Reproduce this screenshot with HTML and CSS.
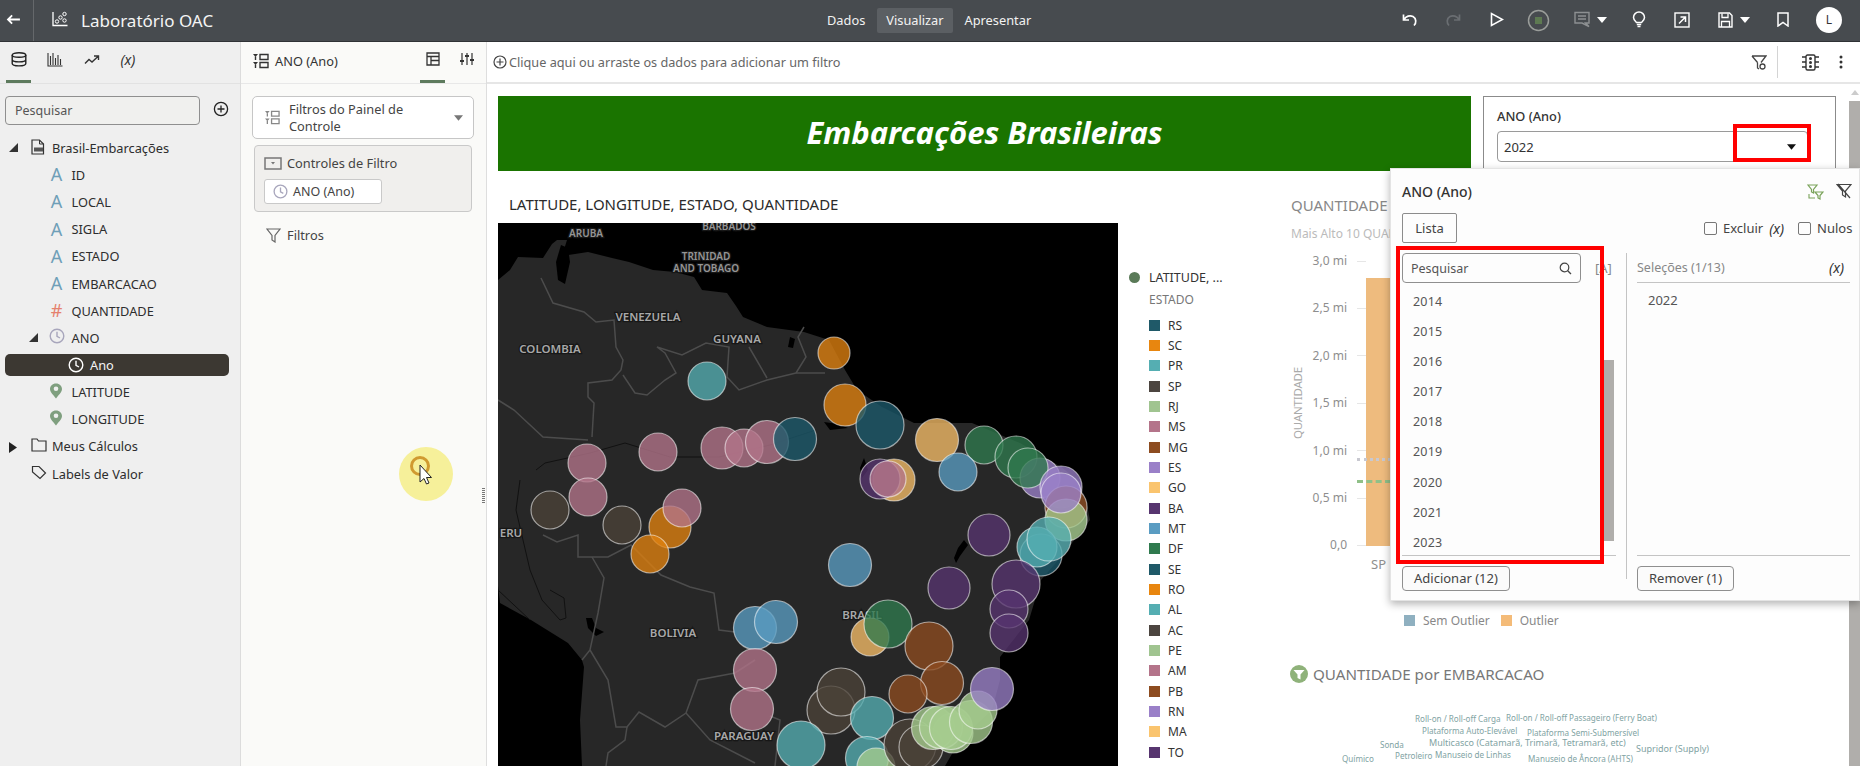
FILE: index.html
```html
<!DOCTYPE html>
<html lang="pt-BR">
<head>
<meta charset="utf-8">
<title>Laboratório OAC</title>
<link rel="stylesheet" href="styles.css">
</head>
<body>
<svg class="sprite" width="0" height="0">
  <symbol id="clock" viewBox="0 0 16 16"><circle cx="8" cy="8" r="6.8" fill="none" stroke="currentColor" stroke-width="1.4"/><path d="M8 3.8V8.4L11 10" fill="none" stroke="currentColor" stroke-width="1.4"/></symbol>
  <symbol id="pin" viewBox="0 0 14 16"><path d="M7 .5C3.4.5 1 3 1 6c0 3.600 4 6.500 6 9.500 2-3 6-5.900 6-9.500C13 3 10.600.5 7 .5z" fill="currentColor"/><circle cx="7" cy="5.800" r="2.300" fill="#f0f0f0"/></symbol>
  <symbol id="caret" viewBox="0 0 10 6"><path d="M0 0H10L5 6z" fill="currentColor"/></symbol>
  <symbol id="filterrows" viewBox="0 0 16 16"><path d="M0 1H5L2.500 4zM0 9H5L2.500 12z" fill="currentColor"/><path d="M1.800 3.500h1.400V7H1.800zM1.800 11.500h1.400V15H1.800z" fill="currentColor"/><path d="M7 1.500h8v5H7zM7 9.500h8v5H7z" fill="none" stroke="currentColor" stroke-width="1.400"/></symbol>
</svg>

<div class="app">
  <header class="topbar">
    <button class="back" aria-label="Voltar">
      <svg width="15" height="11" viewBox="0 0 16 12"><path d="M15 6H2M6.500 1.500 2 6l4.500 4.500" fill="none" stroke="#fff" stroke-width="2"/></svg>
    </button>
    <div class="brand">
      <svg width="16" height="16" viewBox="0 0 16 16"><path d="M1 1V14.500H15.500" fill="none" stroke="#fff" stroke-width="1.300"/><circle cx="5" cy="10.500" r="1.700" fill="none" stroke="#fff"/><circle cx="8.500" cy="6.500" r="1.700" fill="none" stroke="#fff"/><circle cx="12.500" cy="3" r="1.700" fill="none" stroke="#fff"/><circle cx="12.500" cy="9.500" r="1.700" fill="none" stroke="#fff"/></svg>
      <span>Laboratório OAC</span>
    </div>
    <nav class="modes">
      <span class="mode">Dados</span>
      <span class="mode active">Visualizar</span>
      <span class="mode">Apresentar</span>
    </nav>
    <div class="actions">
      <svg class="a1" width="16" height="14" viewBox="0 0 16 14"><path d="M1.500 1.500V7H7M2 6.500C4 3 8 2 11 3.500c3.500 2 3.500 6.500 1 9" fill="none" stroke="#fff" stroke-width="1.700"/></svg>
      <svg class="a2" width="16" height="14" viewBox="0 0 16 14"><path d="M14.500 1.500V7H9M14 6.500C12 3 8 2 5 3.500c-3.500 2-3.500 6.500-1 9" fill="none" stroke="#6a6e72" stroke-width="1.700"/></svg>
      <svg class="a3" width="14" height="15" viewBox="0 0 14 15"><path d="M1.500 1.500V13.500L12.500 7.500z" fill="none" stroke="#fff" stroke-width="1.600"/></svg>
      <svg class="a4" width="23" height="23" viewBox="0 0 23 23"><circle cx="11.500" cy="11.500" r="10" fill="none" stroke="#9a9d9a" stroke-width="1.500"/><rect x="8" y="8" width="7" height="7" fill="#5e7a52"/></svg>
      <svg class="a5" width="16" height="17" viewBox="0 0 16 17"><path d="M1 1.500H15V12H11.500L15 15.500 8 12H1z" fill="none" stroke="#8d9092" stroke-width="1.400"/><path d="M4 5h8M4 8h8" stroke="#8d9092" stroke-width="1.300"/></svg>
      <svg class="a6 caret-w" width="10" height="6"><use href="#caret"/></svg>
      <svg class="a7" width="14" height="17" viewBox="0 0 14 17"><path d="M4.500 11.500C3 10 1.500 8.800 1.500 6.500a5.500 5.500 0 0 1 11 0c0 2.300-1.500 3.500-3 5z" fill="none" stroke="#fff" stroke-width="1.500"/><path d="M4.800 13.500h4.400M5.500 15.500h3" stroke="#fff" stroke-width="1.400"/></svg>
      <svg class="a8" width="16" height="16" viewBox="0 0 16 16"><rect x="1" y="1" width="14" height="14" fill="none" stroke="#fff" stroke-width="1.400"/><path d="M5 11.500 11 5.500M6.500 5H11.500V10" fill="none" stroke="#fff" stroke-width="1.500"/></svg>
      <svg class="a9" width="15" height="16" viewBox="0 0 15 16"><path d="M1 1H11.500L14 3.500V15H1z" fill="none" stroke="#fff" stroke-width="1.400"/><path d="M4 1.500V5.500H10V1.500M3.500 15V9.500H11.500V15" fill="none" stroke="#fff" stroke-width="1.300"/></svg>
      <svg class="a10 caret-w" width="10" height="6"><use href="#caret"/></svg>
      <svg class="a11" width="12" height="15" viewBox="0 0 12 15"><path d="M1 1H11V14L6 10.500 1 14z" fill="none" stroke="#fff" stroke-width="1.500"/></svg>
      <span class="avatar">L</span>
    </div>
  </header>

  <div class="main">
    <aside class="datapanel">
      <div class="tabs">
        <span class="tab on"><svg width="16" height="15" viewBox="0 0 16 15"><ellipse cx="8" cy="3" rx="6.800" ry="2.300" fill="none" stroke="#222" stroke-width="1.400"/><path d="M1.200 3V11.500C1.200 13 4 13.900 8 13.900S14.800 13 14.800 11.500V3M1.200 7.500C1.200 9 4 9.900 8 9.900S14.800 9 14.800 7.500" fill="none" stroke="#222" stroke-width="1.400"/></svg></span>
        <span class="tab"><svg width="16" height="15" viewBox="0 0 16 15"><path d="M1 1V14H15.500M3.500 13V4M6 13V1M8.500 13V6M11 13V3M13.500 13V7" fill="none" stroke="#333" stroke-width="1.100"/></svg></span>
        <span class="tab"><svg width="16" height="10" viewBox="0 0 16 10"><path d="M1 8.500 5 4.500 8 7 14 1.500M10 1H14.500V5" fill="none" stroke="#333" stroke-width="1.400"/></svg></span>
        <span class="tab vars">(x)</span>
      </div>
      <div class="searchrow">
        <div class="search">Pesquisar</div>
        <svg width="16" height="16" viewBox="0 0 16 16"><circle cx="8" cy="8" r="6.600" fill="none" stroke="#222" stroke-width="1.300"/><path d="M8 4.500V11.500M4.500 8H11.500" stroke="#222" stroke-width="1.300"/></svg>
      </div>
      <ul class="tree">
        <li class="node root"><svg class="tri" width="9" height="9" viewBox="0 0 9 9"><path d="M9 0V9H0z" fill="#333"/></svg><svg class="ico" width="14" height="16" viewBox="0 0 14 16"><path d="M1 1H8.500L12.500 5V15H1z" fill="none" stroke="#333" stroke-width="1.200"/><path d="M8.500 1V5H12.500" fill="none" stroke="#333"/><rect x="3" y="8.500" width="9" height="4" fill="#555"/></svg><span>Brasil-Embarcações</span></li>
        <li class="node leaf"><b class="ta">A</b><span>ID</span></li>
        <li class="node leaf"><b class="ta">A</b><span>LOCAL</span></li>
        <li class="node leaf"><b class="ta">A</b><span>SIGLA</span></li>
        <li class="node leaf"><b class="ta">A</b><span>ESTADO</span></li>
        <li class="node leaf"><b class="ta">A</b><span>EMBARCACAO</span></li>
        <li class="node leaf"><b class="tn">#</b><span>QUANTIDADE</span></li>
        <li class="node leaf hastri"><svg class="tri" width="9" height="9" viewBox="0 0 9 9"><path d="M9 0V9H0z" fill="#333"/></svg><svg class="tc" width="16" height="16"><use href="#clock"/></svg><span>ANO</span></li>
        <li class="node sel"><svg width="16" height="16" class="tw"><use href="#clock"/></svg><span>Ano</span></li>
        <li class="node leaf"><svg class="tp" width="14" height="16"><use href="#pin"/></svg><span>LATITUDE</span></li>
        <li class="node leaf"><svg class="tp" width="14" height="16"><use href="#pin"/></svg><span>LONGITUDE</span></li>
        <li class="node root"><svg class="tri" width="8" height="11" viewBox="0 0 8 11"><path d="M0 0 8 5.500 0 11z" fill="#222"/></svg><svg class="ico" width="16" height="14" viewBox="0 0 16 14"><path d="M1 1H6L7.500 3H15V13H1z" fill="none" stroke="#333" stroke-width="1.200"/></svg><span>Meus Cálculos</span></li>
        <li class="node root notri"><svg class="ico" width="16" height="15" viewBox="0 0 16 15"><path d="M1.500 1.500H8L14.500 8 9 13.500 1.500 7z" fill="none" stroke="#333" stroke-width="1.200"/></svg><span>Labels de Valor</span></li>
      </ul>
    </aside>

    <aside class="filterpanel">
      <div class="fp-head">
        <svg class="fr" width="16" height="16"><use href="#filterrows"/></svg>
        <span class="fp-title">ANO (Ano)</span>
        <span class="fp-tab on"><svg width="14" height="14" viewBox="0 0 14 14"><path d="M1 1H13V13H1zM1 4.500H13M5 4.500V13M5 8.500H13" fill="none" stroke="#333" stroke-width="1.300"/></svg></span>
        <span class="fp-tab"><svg width="14" height="14" viewBox="0 0 14 14"><path d="M2 1V13M7 1V13M12 1V13" stroke="#333" stroke-width="1.200"/><path d="M0 9H4M5 4H9M10 8H14" stroke="#333" stroke-width="2"/></svg></span>
      </div>
      <div class="fp-body">
        <div class="fp-select">
          <svg class="fr2" width="15" height="15"><use href="#filterrows"/></svg>
          <span>Filtros do Painel de Controle</span>
          <svg class="fp-caret" width="9" height="6"><use href="#caret"/></svg>
        </div>
        <div class="controls">
          <div class="controls-title">
            <svg width="18" height="13" viewBox="0 0 18 13"><rect x="1" y="1" width="16" height="11" fill="none" stroke="#777" stroke-width="1.500"/><path d="M7 5H11L9 7.500z" fill="#777"/></svg>
            <span>Controles de Filtro</span>
          </div>
          <div class="chip"><svg class="tc" width="15" height="15"><use href="#clock"/></svg><span>ANO (Ano)</span></div>
        </div>
        <div class="filters-row">
          <svg width="15" height="15" viewBox="0 0 15 15"><path d="M1 1H14L9 7.500V14L6 12V7.500z" fill="none" stroke="#666" stroke-width="1.200"/></svg>
          <span>Filtros</span>
        </div>
      </div>
      <span class="splitter"></span>
      <div class="cursor-glow" aria-hidden="true">
        <svg width="54" height="54" viewBox="0 0 54 54"><circle cx="21" cy="19" r="8.500" fill="none" stroke="#d09a30" stroke-width="3"/><path d="M21 18V35L25 31.500 27.500 37 30 36 27.500 30.500H32.500z" fill="#fff" stroke="#222" stroke-width="1"/></svg>
      </div>
    </aside>

    <section class="canvas">
      <div class="filterbar">
        <svg class="fb-plus" width="14" height="14" viewBox="0 0 14 14"><circle cx="7" cy="7" r="6" fill="none" stroke="#444" stroke-width="1.200"/><path d="M7 3.500V10.500M3.500 7H10.500" stroke="#444" stroke-width="1.200"/></svg>
        <span class="fb-text">Clique aqui ou arraste os dados para adicionar um filtro</span>
        <svg class="fb-f" width="16" height="15" viewBox="0 0 16 15"><path d="M1 1H15L10 7.500M6.500 7.500V13L8 14M1 1 6.500 7.500" fill="none" stroke="#444" stroke-width="1.300"/><circle cx="11.500" cy="11.500" r="2.500" fill="none" stroke="#444" stroke-width="1.300"/></svg>
        <span class="fb-div"></span>
        <svg class="fb-t" width="17" height="17" viewBox="0 0 17 17"><rect x="4" y="1" width="9" height="15" rx="1.500" fill="none" stroke="#333" stroke-width="1.400"/><circle cx="8.500" cy="4.500" r="1.500" fill="#333"/><circle cx="8.500" cy="8.500" r="1.500" fill="#333"/><circle cx="8.500" cy="12.500" r="1.500" fill="#333"/><path d="M0 3H4M0 8H4M0 13H4M13 3H17M13 8H17M13 13H17" stroke="#333" stroke-width="1.300"/></svg>
        <svg class="fb-m" width="4" height="14" viewBox="0 0 4 14"><circle cx="2" cy="2" r="1.500" fill="#333"/><circle cx="2" cy="7" r="1.500" fill="#333"/><circle cx="2" cy="12" r="1.500" fill="#333"/></svg>
      </div>

      <div class="board">
        <div class="sheet">
          <div class="top-row">
            <div class="banner">Embarcações Brasileiras</div>
            <div class="ctl">
              <div class="ctl-label">ANO (Ano)</div>
              <div class="ctl-input"><span>2022</span><svg width="9" height="6"><use href="#caret"/></svg></div>
            </div>
          </div>
          <div class="viz-row">
            <div class="map-col">
              <div class="viz-title">LATITUDE, LONGITUDE, ESTADO, QUANTIDADE</div>
              <svg class="map" width="620" height="543" viewBox="498 223 620 543">
                <rect x="498" y="223" width="620" height="543" fill="#000"/>
                <path fill="#272727" d="M498 280 510 270 518 257 543 258 552 244 557 240 567 240 562 256 588 252 612 258 629 262 653 270 675 272 694 277 702 290 727 293 736 306 743 317 767 327 804 332 829 340 845 370 857 390 882 407 914 423 972 423 1020 443 1061 467 1078 480 1086 500 1090 520 1061 557 1041 580 1029 620 1000 657 1000 680 992 710 960 740 945 766 582 766 580 720 584 667 582 660 568 643 531 620 500 603 498 586z"/>
                <g fill="#000">
                  <path d="M561 245 568 248 570 262 565 284 558 280 556 262z"/>
                  <path d="M790 337 795 339 793 348 788 347z"/>
                  <path d="M586 618 592 618 596 628 604 632 596 636 588 628z"/>
                  <path d="M964 540 968 545 960 556 956 563 954 558 958 548z"/>
                  <path d="M824 422 838 424 848 428 830 430z"/>
                  <path d="M864 458 868 470 862 478 860 468z"/>
                </g>
                <g class="borders">
                  <path d="M541 278 553 303 584 312 596 322 614 320 616 347 623 360 621 370 612 380 588 383 588 397 594 403 592 437"/>
                  <path d="M623 375 635 393 647 395 665 380 676 373 665 353 657 347 682 355 706 343 729 347 727 377 739 390 767 380 796 373 825 373"/>
                  <path d="M749 347 767 378M804 327 798 337 806 357 796 373"/>
                  <path d="M498 400 514 410 543 437 588 440"/>
                  <path d="M543 535 557 542 578 535 578 557 608 557 631 545 661 575 690 587 714 593 719 630 735 632"/>
                  <path d="M592 557 604 578 598 613 590 650 582 660M590 650 608 680 616 727 627 727 639 712 665 727 686 713 698 680 735 673 755 660"/>
                  <path d="M627 727 625 740 608 753 606 766M686 713 710 740 755 763M770 716 780 720 775 766"/>
                </g>
                <g class="rivers">
                  <path d="M536 470 545 463 590 453 625 443 670 457 719 457 770 445 816 430"/>
                  <path d="M520 480 516 510 530 570 542 600 560 620 566 618 564 598 550 590M498 590 530 620"/>
                </g>
                <g class="labels">
                  <text x="586" y="237">ARUBA</text>
                  <text x="729" y="230">BARBADOS</text>
                  <text x="706" y="260">TRINIDAD</text>
                  <text x="706" y="272">AND TOBAGO</text>
                  <text class="lg" x="648" y="321">VENEZUELA</text>
                  <text class="lg" x="550" y="353">COLOMBIA</text>
                  <text class="lg" x="737" y="343">GUYANA</text>
                  <text class="lg" x="511" y="537">ERU</text>
                  <text class="lg" x="673" y="637">BOLIVIA</text>
                  <text class="lg" x="862" y="619">BRASIL</text>
                  <text class="lg" x="744" y="740">PARAGUAY</text>
                </g>
                <g class="dots">
                  <circle class="c-sc" cx="834" cy="353" r="16"/>
                  <circle class="c-pr" cx="707" cy="381" r="19"/>
                  <circle class="c-sc" cx="845" cy="405" r="21"/>
                  <circle class="c-rs" cx="880" cy="425" r="24"/>
                  <circle class="c-go" cx="937" cy="440" r="21.500"/>
                  <circle class="c-df" cx="984" cy="445" r="19"/>
                  <circle class="c-df" cx="1016" cy="457" r="21"/>
                  <circle class="c-mt" cx="958" cy="472" r="19"/>
                  <circle class="c-es" cx="1040" cy="478" r="20"/>
                  <circle class="c-df" cx="1028" cy="468" r="20"/>
                  <circle class="c-es" cx="1061" cy="487" r="21"/>
                  <circle class="c-go" cx="894" cy="480" r="21"/>
                  <circle class="c-ba" cx="880" cy="479" r="20"/>
                  <circle class="c-ms" cx="888" cy="479" r="18"/>
                  <circle class="c-ms" cx="658" cy="452" r="19"/>
                  <circle class="c-ms" cx="587" cy="463" r="19"/>
                  <circle class="c-ms" cx="722" cy="448" r="21"/>
                  <circle class="c-ms" cx="744" cy="448" r="19"/>
                  <circle class="c-ms" cx="767" cy="442" r="21.500"/>
                  <circle class="c-rs" cx="795" cy="439" r="21.500"/>
                  <circle class="c-ms" cx="588" cy="497" r="19"/>
                  <circle class="c-sp" cx="550" cy="510" r="19"/>
                  <circle class="c-sp" cx="622" cy="525" r="19"/>
                  <circle class="c-sc" cx="670" cy="527" r="21"/>
                  <circle class="c-ms" cx="682" cy="508" r="19"/>
                  <circle class="c-sc" cx="650" cy="554" r="19"/>
                  <circle class="c-mg" cx="1066" cy="507" r="21"/>
                  <circle class="c-rj" cx="1066" cy="520" r="21"/>
                  <circle class="c-es" cx="1061" cy="493" r="20"/>
                  <circle class="c-rs" cx="1041" cy="555" r="21"/>
                  <circle class="c-pr" cx="1037" cy="547" r="20"/>
                  <circle class="c-pr" cx="1049" cy="539" r="22"/>
                  <circle class="c-ba" cx="989" cy="535" r="21"/>
                  <circle class="c-ba" cx="949" cy="588" r="21"/>
                  <circle class="c-ba" cx="1016" cy="584" r="24"/>
                  <circle class="c-ba" cx="1009" cy="609" r="19"/>
                  <circle class="c-ba" cx="1009" cy="633" r="19"/>
                  <circle class="c-mt" cx="850" cy="565" r="21.500"/>
                  <circle class="c-mt" cx="755" cy="628" r="21.500"/>
                  <circle class="c-mt" cx="776" cy="622" r="21.500"/>
                  <circle class="c-go" cx="870" cy="637" r="19"/>
                  <circle class="c-df" cx="888" cy="624" r="24"/>
                  <circle class="c-mg" cx="929" cy="646" r="24"/>
                  <circle class="c-mg" cx="942" cy="683" r="21.500"/>
                  <circle class="c-mg" cx="908" cy="694" r="19"/>
                  <circle class="c-ms" cx="755" cy="670" r="21.500"/>
                  <circle class="c-ms" cx="752" cy="709" r="21.500"/>
                  <circle class="c-sp" cx="831" cy="710" r="24"/>
                  <circle class="c-sp" cx="841" cy="692" r="24"/>
                  <circle class="c-pr" cx="872" cy="718" r="21.500"/>
                  <circle class="c-pr" cx="801" cy="745" r="24"/>
                  <circle class="c-pr" cx="867" cy="758" r="21.500"/>
                  <circle class="c-rj" cx="876" cy="767" r="19"/>
                  <circle class="c-sp" cx="910" cy="745" r="26"/>
                  <circle class="c-sp" cx="921" cy="747" r="22"/>
                  <circle class="c-rj" cx="953" cy="733" r="20"/>
                  <circle class="c-rj" cx="933" cy="728" r="21.500"/>
                  <circle class="c-rj" cx="941" cy="727" r="21.500"/>
                  <circle class="c-rj" cx="951" cy="728" r="21.500"/>
                  <circle class="c-rj" cx="971" cy="722" r="21.500"/>
                  <circle class="c-rj" cx="978" cy="710" r="19"/>
                  <circle class="c-es" cx="992" cy="689" r="21.500"/>
                </g>
              </svg>
            </div>
            <div class="legend">
              <div class="lg-head"><i class="lg-dot"></i><span>LATITUDE, ...</span></div>
              <div class="lg-sub">ESTADO</div>
              <ul class="lg-list">
                <li><i class="s-rs"></i>RS</li><li><i class="s-sc"></i>SC</li><li><i class="s-pr"></i>PR</li><li><i class="s-sp"></i>SP</li><li><i class="s-rj"></i>RJ</li><li><i class="s-ms"></i>MS</li><li><i class="s-mg"></i>MG</li><li><i class="s-es"></i>ES</li><li><i class="s-go"></i>GO</li><li><i class="s-ba"></i>BA</li><li><i class="s-mt"></i>MT</li><li><i class="s-df"></i>DF</li><li><i class="s-rs"></i>SE</li><li><i class="s-sc"></i>RO</li><li><i class="s-pr"></i>AL</li><li><i class="s-sp"></i>AC</li><li><i class="s-rj"></i>PE</li><li><i class="s-ms"></i>AM</li><li><i class="s-mg"></i>PB</li><li><i class="s-es"></i>RN</li><li><i class="s-go"></i>MA</li><li><i class="s-ba"></i>TO</li>
              </ul>
            </div>
            <div class="chart-col">
              <div class="chart-title">QUANTIDADE</div>
              <div class="chart-sub">Mais Alto 10 QUANTIDADE</div>
              <div class="plot">
                <div class="y-title"><span>QUANTIDADE</span></div>
                <div class="y-axis">
                  <span>3,0 mi</span><span>2,5 mi</span><span>2,0 mi</span><span>1,5 mi</span><span>1,0 mi</span><span>0,5 mi</span><span>0,0</span>
                </div>
                <div class="bars">
                  <div class="bar"></div>
                  <div class="x-label">SP</div>
                  <i class="ref ref1"></i>
                  <i class="ref ref2"></i>
                </div>
              </div>
              <div class="outlier-legend">
                <i class="ol-a"></i><span>Sem Outlier</span><i class="ol-b"></i><span>Outlier</span>
              </div>
              <div class="cloud-title">
                <svg width="18" height="18" viewBox="0 0 18 18"><circle cx="9" cy="9" r="9" fill="#8fb27a"/><path d="M3.500 5H14.500L10.500 9.500V14.500L7.500 13V9.500z" fill="#fff"/></svg>
                <span>QUANTIDADE por EMBARCACAO</span>
              </div>
              <div class="cloud">
                <span class="w" style="left:124px;top:5px">Roll-on / Roll-off Carga</span>
                <span class="w" style="left:215px;top:4px">Roll-on / Roll-off Passageiro (Ferry Boat)</span>
                <span class="w" style="left:131px;top:17px">Plataforma Auto-Elevável</span>
                <span class="w" style="left:236px;top:19px">Plataforma Semi-Submersível</span>
                <span class="w" style="left:89px;top:31px">Sonda</span>
                <span class="w big" style="left:138px;top:29px">Multicasco (Catamarã, Trimarã, Tetramarã, etc)</span>
                <span class="w big" style="left:345px;top:35px">Supridor (Supply)</span>
                <span class="w" style="left:51px;top:45px">Químico</span>
                <span class="w" style="left:104px;top:42px">Petroleiro</span>
                <span class="w" style="left:144px;top:41px">Manuseio de Linhas</span>
                <span class="w" style="left:237px;top:45px">Manuseio de Âncora (AHTS)</span>
              </div>
            </div>
          </div>
        </div>
        <div class="scrollbar"><span class="sb-up"></span><span class="sb-thumb"></span></div>
      </div>
    </section>
  </div>

  <div class="redbox rb-caret"></div>

  <div class="popup">
    <div class="pop-head">
      <span class="pop-title">ANO (Ano)</span>
      <svg class="pi1" width="17" height="17" viewBox="0 0 17 17"><path d="M1 1H10L6.500 5.500V9L4.500 8V5.500zM8 8H16L13 11.500V15L11 14V11.500z" fill="none" stroke="#7aa35a" stroke-width="1.200"/><path d="M2 10V14H8" fill="none" stroke="#7aa35a" stroke-width="1.100"/></svg>
      <svg class="pi2" width="16" height="16" viewBox="0 0 16 16"><path d="M1 1.500H15L9.500 8V14L6.500 12V8zM2 1 14 15" fill="none" stroke="#444" stroke-width="1.200"/></svg>
    </div>
    <div class="pop-opts">
      <span class="list-btn">Lista</span>
      <label class="check ex"><i></i><span>Excluir</span><em>(x)</em></label>
      <label class="check"><i></i><span>Nulos</span></label>
    </div>
    <div class="pop-cols">
      <div class="pick">
        <div class="pick-top">
          <div class="pop-search"><span>Pesquisar</span><svg width="13" height="13" viewBox="0 0 13 13"><circle cx="5.500" cy="5.500" r="4.300" fill="none" stroke="#444" stroke-width="1.200"/><path d="M8.700 8.700 12 12" stroke="#444" stroke-width="1.300"/></svg></div>
          <span class="bracket">[A]</span>
        </div>
        <div class="pick-list">
          <ul>
            <li>2014</li><li>2015</li><li>2016</li><li>2017</li><li>2018</li><li>2019</li><li>2020</li><li>2021</li><li>2023</li>
          </ul>
          <div class="vbar"><span class="vthumb"></span></div>
        </div>
        <div class="pick-foot"><span class="btn">Adicionar (12)</span></div>
      </div>
      <div class="chosen">
        <div class="chosen-head"><span>Seleções (1/13)</span><em>(x)</em></div>
        <div class="chosen-list">2022</div>
        <div class="pick-foot"><span class="btn">Remover (1)</span></div>
      </div>
    </div>
    <div class="redbox rb-list"></div>
  </div>
</div>
</body>
</html>
```
FILE: styles.css
```css
* { box-sizing: border-box; }
html, body { margin: 0; height: 100%; overflow: hidden; }
body { font-family: "Noto Sans", "Open Sans", sans-serif; color: #333; background: #fff; }
ul { list-style: none; margin: 0; padding: 0; }
.sprite { position: absolute; }
.app { position: relative; width: 1860px; height: 766px; display: flex; flex-direction: column; overflow: hidden; }

/* top bar */
.topbar { height: 42px; flex: none; display: flex; align-items: center; background: #474b4f; border-bottom: 1px solid #2f3235; color: #fff; position: relative; }
.back { width: 34px; height: 41px; border: 0; border-right: 1px solid #65686b; background: none; padding: 0 6px 3px 0; display: flex; align-items: center; justify-content: center; }
.brand { display: flex; align-items: center; gap: 13px; margin-left: 18px; font-size: 17px; color: #f4f4f4; }
.brand svg { margin-top: -3px; }
.modes { display: flex; gap: 0; position: absolute; left: 818px; top: 8px; font-size: 12.800px; }
.mode { height: 25px; padding: 0 9px; line-height: 24px; color: #f2f2f2; margin-right: 3px; border-radius: 2px; }
.mode.active { background: #5b5f63; }
.actions { position: absolute; left: 0; top: 0; width: 100%; height: 41px; }
.actions svg, .avatar { position: absolute; }
.a1 { left: 1402px; top: 13px; }
.a2 { left: 1445px; top: 13px; }
.a3 { left: 1490px; top: 12px; }
.a4 { left: 1527px; top: 9px; }
.a5 { left: 1574px; top: 11px; }
.a6 { left: 1597px; top: 17px; }
.a7 { left: 1632px; top: 11px; }
.a8 { left: 1674px; top: 12px; }
.a9 { left: 1718px; top: 12px; }
.a10 { left: 1740px; top: 17px; }
.a11 { left: 1777px; top: 12px; }
.caret-w { color: #fff; }
.avatar { left: 1816px; top: 7px; width: 26px; height: 26px; border-radius: 50%; background: #fff; color: #333; font-size: 12px; line-height: 26px; text-align: center; }

.main { flex: 1; display: flex; min-height: 0; }

/* data panel */
.datapanel { width: 241px; flex: none; background: #efefef; border-right: 1px solid #dcdcdc; }
.tabs { height: 42px; display: flex; padding-left: 6px; border-bottom: 1px solid #e2e2e2; }
.tab { width: 25px; margin-right: 11.500px; height: 41px; display: flex; align-items: center; justify-content: center; padding-bottom: 3px; border-bottom: 3px solid transparent; }
.tab.on { border-bottom-color: #5d7a5d; }
.vars { font-style: italic; font-size: 14px; color: #333; }
.searchrow { display: flex; align-items: center; gap: 13px; padding: 12px 0 0 5px; }
.search { width: 195px; height: 29px; border: 1px solid #8f8f8f; border-radius: 4px; background: #f0f0ee; font-size: 12.500px; line-height: 27px; padding-left: 9px; color: #555; }
.searchrow svg { margin-top: -4px; }
.tree { padding-top: 9px; font-size: 12.800px; color: #2d2d2d; }
.node { height: 27.200px; display: flex; align-items: center; position: relative; }
.node.root { padding-left: 52px; }
.node.leaf { padding-left: 71.500px; }
.node.root .tri { position: absolute; left: 9px; top: 9px; }
.node .ico { position: absolute; left: 31px; top: 5px; }
.node .tri { position: absolute; }
.hastri .tri { left: 29px; top: 9px; }
.ta, .tn { position: absolute; left: 50px; width: 13px; text-align: center; font-weight: 400; font-size: 18px; line-height: 27px; }
.ta { color: #6f9fb8; }
.tn { color: #e5816e; }
.tc { color: #a8a6bc; }
.tp { color: #7f9f7f; position: absolute; left: 49px; top: 4px; }
.leaf .tc { position: absolute; left: 49px; top: 4px; }
.sel { height: 22px; margin: 2px 11px 3px 5px; padding-left: 85px; background: #3c3832; border-radius: 5px; color: #f4f4f4; }
.tw { color: #fff; position: absolute; left: 63px; top: 3px; }

/* filter panel */
.filterpanel { width: 246px; flex: none; background: #fafaf8; border-right: 1px solid #dedede; position: relative; }
.fp-head { height: 42px; display: flex; align-items: center; border-bottom: 1px solid #e8e8e8; position: relative; font-size: 12.800px; }
.fr { margin-left: 12px; margin-top: -3px; color: #333; }
.fp-title { margin-left: 6px; margin-top: -3px; }
.fp-tab { position: absolute; top: 0; height: 41px; width: 25px; display: flex; align-items: center; justify-content: center; padding-bottom: 4px; border-bottom: 3px solid transparent; }
.fp-tab.on { left: 179px; border-bottom-color: #5d7a5d; }
.fp-tab:last-child { left: 213px; }
.fp-body { padding: 12px 12px 0 11px; }
.fp-select { height: 43px; border: 1px solid #c6c6c6; border-radius: 5px; background: #fff; display: flex; align-items: center; font-size: 12.800px; line-height: 16.500px; color: #444; padding-left: 12px; position: relative; }
.fr2 { flex: none; color: #888; margin-right: 9px; }
.fp-select span { width: 150px; }
.fp-caret { position: absolute; right: 10px; top: 18px; color: #777; }
.controls { margin: 6px 2px 0; height: 67px; background: #f0efed; border: 1px solid #c9c9c9; border-radius: 4px; padding: 8px 9px 0; }
.controls-title { display: flex; align-items: center; gap: 5px; font-size: 12.800px; color: #444; }
.chip { width: 118px; height: 25px; margin-top: 7px; background: #fff; border: 1px solid #c9c9c9; border-radius: 3px; display: flex; align-items: center; gap: 5px; padding-left: 8px; font-size: 12.500px; color: #444; }
.filters-row { display: flex; align-items: center; gap: 6px; padding: 14px 0 0 14px; font-size: 12.800px; color: #444; }
.splitter { position: absolute; left: 240.500px; top: 446px; width: 3px; height: 16px; background: repeating-linear-gradient(#777 0 1px, transparent 1px 2px); }
.cursor-glow { position: absolute; left: 158px; top: 405px; width: 54px; height: 54px; border-radius: 50%; background: #f6f09a; }

/* canvas */
.canvas { flex: 1; min-width: 0; display: flex; flex-direction: column; background: #fff; }
.filterbar { height: 42px; flex: none; display: flex; align-items: center; border-bottom: 2px solid #e6e6e6; font-size: 12.700px; color: #666; position: relative; }
.fb-plus { margin-left: 6px; }
.fb-text { margin-left: 2px; flex: 1; }
.fb-f { margin-right: 10px; }
.fb-div { width: 1px; height: 32px; background: #d4d4d4; }
.fb-t { margin-left: 24px; margin-right: 20px; }
.fb-m { margin-right: 17px; }

.board { flex: 1; min-height: 0; display: flex; }
.sheet { flex: 1; min-width: 0; overflow: hidden; }
.top-row { display: flex; gap: 12px; margin: 12px 0 0 11px; height: 75px; }
.banner { width: 973px; background: #1a7400; color: #fff; font-size: 31px; font-weight: 700; font-style: italic; display: flex; align-items: center; justify-content: center; padding-bottom: 3px; }
.ctl { width: 353px; height: 90px; border: 1px solid #8b8b8b; padding: 10px 13px 0; }
.ctl-label { font-size: 12.800px; font-weight: 500; line-height: 18px; }
.ctl-input { margin-top: 6px; width: 311px; height: 31px; border: 1px solid #9a9a9a; border-radius: 4px; display: flex; align-items: center; justify-content: space-between; padding: 0 8px 0 6px; font-size: 13px; }
.ctl-input svg { color: #111; margin-right: 3px; }

.viz-row { display: flex; margin-left: 11px; }
.map-col { width: 620px; flex: none; }
.viz-title { height: 52px; padding: 14px 0 0 11px; display: flex; align-items: center; font-size: 15px; white-space: nowrap; color: #2b2b2b; }
.map { display: block; }
.borders path { fill: none; stroke: #4c4c4c; stroke-width: 1.500; }
.rivers path { fill: none; stroke: #111; stroke-width: 1; }
.dots circle { stroke: rgba(255, 255, 255, .55); stroke-width: 1.200; fill-opacity: .78; }
.c-rs { fill: #1c5a6c; } .c-sc { fill: #e08210; } .c-pr { fill: #55aeb2; } .c-sp { fill: #4c4238; }
.c-rj { fill: #a5cc8e; } .c-ms { fill: #b4748a; } .c-mg { fill: #8d4c20; } .c-es { fill: #9a80c8; }
.c-go { fill: #f5bd68; } .c-ba { fill: #57356f; } .c-mt { fill: #5a9cc2; } .c-df { fill: #2f7a4e; }
.labels text { font-size: 10px; fill: #959595; text-anchor: middle; paint-order: stroke; stroke: #171717; stroke-width: 2.500px; font-weight: 600; }
.labels .lg { font-size: 11.500px; fill: #a8a8a8; font-weight: 600; }

.legend { width: 173px; flex: none; padding: 98px 0 0 11px; font-size: 12px; color: #333; }
.lg-head { display: flex; align-items: center; gap: 9px; font-size: 12.500px; height: 16px; }
.lg-dot { width: 11px; height: 11px; border-radius: 50%; background: #5a7a58; }
.lg-sub { margin: 6px 0 6px 20px; color: #777; line-height: 18px; font-size: 12px; }
.lg-list { padding-left: 20px; }
.lg-list li { height: 20.330px; display: flex; align-items: center; gap: 8px; }
.lg-list i { width: 11px; height: 11px; }
.s-rs { background: #1f5968; } .s-sc { background: #e8860f; } .s-pr { background: #55aeb2; } .s-sp { background: #4c4540; }
.s-rj { background: #a0c490; } .s-ms { background: #b4748a; } .s-mg { background: #8d4c20; } .s-es { background: #9a80c8; }
.s-go { background: #fac46e; } .s-ba { background: #57356f; } .s-mt { background: #5a9cc2; } .s-df { background: #2f7a4e; }

.chart-col { width: 559px; flex: none; position: relative; }
.chart-title { height: 44px; padding-top: 24px; display: flex; align-items: center; font-size: 15px; color: #888; white-space: nowrap; }
.chart-sub { font-size: 12px; color: #bbb; height: 12px; margin-top: 10px; line-height: 18px; white-space: nowrap; }
.plot { display: flex; height: 332px; font-size: 12px; color: #8e8e8e; }
.y-title { width: 12px; display: flex; align-items: center; justify-content: center; }
.y-title span { writing-mode: vertical-rl; transform: rotate(180deg); font-size: 11.500px; color: #aaa; letter-spacing: -.2px; }
.y-axis { width: 44px; display: flex; flex-direction: column; align-items: flex-end; }
.y-axis span { height: 47.400px; line-height: 47.400px; font-size: 12px; position: relative; }
.y-axis span::after { content: ""; position: absolute; left: calc(100% + 10px); top: 50%; width: 9px; height: 1px; background: #e6e6e6; }
.bars { width: 60px; position: relative; margin-left: 10px; }
.bar { position: absolute; left: 9px; top: 41px; width: 34px; height: 268px; background: #eebb7e; }
.x-label { position: absolute; left: 14px; top: 318px; font-size: 13px; line-height: 18px; }
.ref { position: absolute; left: 0; width: 34px; }
.ref1 { top: 221px; border-top: 3px dotted #c8c8d0; }
.ref2 { top: 243px; border-top: 3px dashed #90c088; }
.outlier-legend { display: flex; align-items: center; margin: 43px 0 0 113px; font-size: 12px; color: #888; }
.ol-a, .ol-b { width: 11px; height: 11px; margin-right: 8px; }
.ol-a { background: #8fb0c0; }
.ol-b { background: #f4bb78; margin-left: 11px; }
.cloud-title { display: flex; align-items: center; gap: 5px; margin: 35px 0 0 -1px; font-size: 15.200px; color: #777; }
.cloud { position: relative; height: 60px; margin-top: 24px; }
.w { position: absolute; font-size: 8.100px; color: #7fa3a3; white-space: nowrap; line-height: 12px; }
.w.big { font-size: 9px; }

.scrollbar { width: 11px; flex: none; position: relative; background: #fff; display: flex; flex-direction: column; }
.sb-up { height: 0; width: 0; margin: 6px 0 6px 2px; border: 4px solid transparent; border-top: 0; border-bottom: 5px solid #ccc; }
.sb-thumb { flex: 1; background: #b0aeab; }

/* overlays */
.redbox { position: absolute; border: 4px solid #f00; pointer-events: none; }
.rb-caret { left: 1733px; top: 124px; width: 78px; height: 38px; }
.popup { position: absolute; left: 1390px; top: 168px; width: 470px; height: 433px; background: #fdfdfd; border: 1px solid #e4e4e4; box-shadow: 0 3px 8px rgba(0, 0, 0, .3); }
.rb-list { left: 5px; top: 77px; width: 208px; height: 318px; }
.pop-head { height: 44px; display: flex; align-items: center; padding-left: 11px; font-size: 14px; font-weight: 500; position: relative; }
.pi1 { position: absolute; left: 416px; top: 15px; }
.pi2 { position: absolute; left: 445px; top: 14px; }
.pop-opts { display: flex; align-items: center; padding-left: 11px; height: 30px; font-size: 13px; color: #444; }
.list-btn { width: 55px; height: 30px; border: 1px solid #8c8c8c; border-radius: 2px; text-align: center; line-height: 28px; margin-right: 247px; }
.check { display: inline-flex; align-items: center; gap: 6px; }
.check.ex { margin-right: 14px; }
.check i { width: 13px; height: 13px; border: 1px solid #777; border-radius: 2px; }
.check em, .chosen-head em { font-style: italic; font-size: 14px; color: #333; }
.pop-cols { display: flex; margin-top: 10px; }
.pick { width: 236px; padding-left: 11px; border-right: 1px solid #c4c4c4; height: 326px; margin-right: 10px; flex: none; }
.pick-top { display: flex; align-items: center; height: 30px; gap: 14px; font-size: 13px; color: #555; }
.pop-search { width: 179px; height: 30px; border: 1px solid #8f8f8f; border-radius: 4px; display: flex; align-items: center; justify-content: space-between; padding: 0 8px 0 8px; font-size: 12.500px; color: #555; }
.bracket { color: #888; }
.pick-list { height: 273px; border-bottom: 1px solid #c4c4c4; display: flex; margin-right: 10px; position: relative; }
.pick-list ul { flex: 1; padding: 4px 0 0 11px; font-size: 12.500px; color: #555; }
.pick-list li { height: 30.100px; line-height: 30px; letter-spacing: .2px; }
.vbar { width: 12px; margin-left: auto; padding-top: 77px; }
.vthumb { display: block; width: 10px; height: 181px; background: #b0aeab; }
.pick-foot { padding-top: 10px; }
.btn { display: inline-block; height: 25px; padding: 0 11px; border: 1px solid #8f8f8f; border-radius: 4px; font-size: 13px; line-height: 23px; color: #444; background: #fbfbfb; }
.chosen { width: 213px; flex: none; }
.chosen-head { display: flex; justify-content: space-between; align-items: center; height: 30px; border-bottom: 1px solid #c4c4c4; font-size: 12.500px; color: #888; padding-right: 6px; }
.chosen-list { height: 273px; border-bottom: 1px solid #c4c4c4; padding: 8px 0 0 11px; font-size: 13px; color: #555; }
```
